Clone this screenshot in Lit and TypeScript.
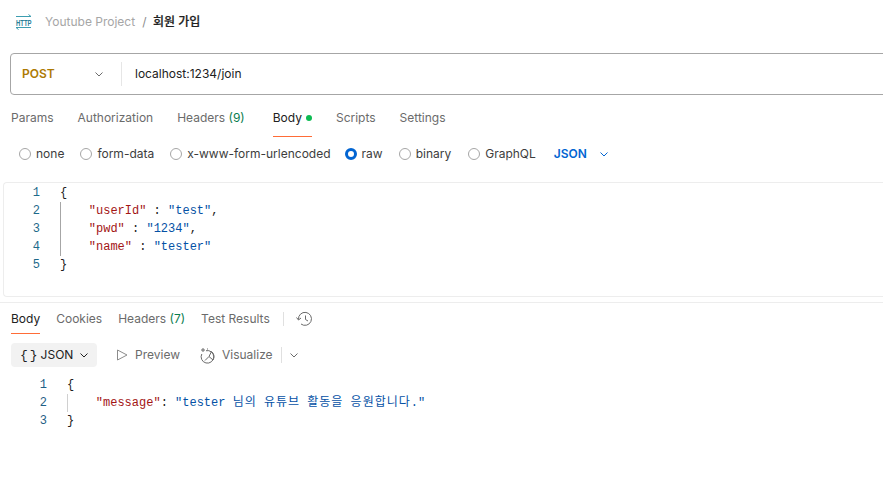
import { LitElement, html, css } from "lit";
import { customElement } from "lit/decorators.js";

const chev = html`<svg class="chev" width="12" height="12" viewBox="0 0 12 12"><path d="M2.500 4.500 6 8l3.500-3.500" fill="none" stroke="currentColor" stroke-width="1"/></svg>`;

@customElement("app-root")
export class AppRoot extends LitElement {
  static styles = css`
    :host { display: block; width: 883px; height: 504px; overflow: hidden; background: #fff; font: 12px/16px Inter, "Noto Sans CJK KR", sans-serif; color: #6b6b6b; }
    .crumbs { display: flex; align-items: center; height: 44px; padding-left: 15px; }
    .crumbs svg { margin-right: 12px; overflow: visible; }
    .proj { color: #a6a6a6; }
    .sep { color: #8c8c8c; margin: 0 6.500px 0 7px; }
    .title { color: #212121; font-weight: 500; -webkit-text-stroke: 0.2px #212121; }
    .url { display: flex; align-items: center; height: 40px; margin: 9px -20px 0 10px; border: 1px solid #a6a6a6; border-radius: 4px; }
    .method { width: 111px; box-sizing: border-box; padding: 0 11px; display: flex; align-items: center; color: #ad7a03; font-weight: 600; height: 24px; border-right: 1px solid #e6e6e6; }
    .method span { flex: 1; }
    .method .chev { color: #6b6b6b; margin-right: 5px; }
    .addr { margin-left: 13px; color: #212121; }
    .tabs { display: flex; height: 38px; margin-top: 4px; padding-left: 11px; gap: 24px; }
    .tab { display: flex; align-items: center; position: relative; }
    .tab.on { color: #212121; }
    .tab.on::after { content: ""; position: absolute; left: 0; right: 0; bottom: 0; height: 1px; background: #ff6c37; }
    .tab.wide { margin-right: 4px; }
    .cnt { color: #0a7d4f; }
    .dot { width: 6px; height: 6px; border-radius: 50%; background: #0cbb52; margin-left: 4px; }
    .modes { display: flex; align-items: center; height: 28px; margin-top: 3px; padding-left: 19px; gap: 16px; }
    .modes label { display: flex; align-items: center; gap: 5px; color: #3d3d3d; }
    .modes label:nth-child(3) { margin-right: -2px; }
    .modes label:nth-child(5) { margin-right: 1px; }
    .r { width: 12px; height: 12px; box-sizing: border-box; border-radius: 50%; border: 1px solid #a6a6a6; }
    .r.on { border: 3.500px solid #0265d2; }
    .lang { display: flex; align-items: center; gap: 11px; color: #0265d2; font-weight: 600; margin-left: 2px; }
    .editor { margin: 14px 0 0 3px; height: 115px; box-sizing: border-box; border: 1px solid #ededed; border-right: 0; border-radius: 4px 0 0 4px; padding-top: 1px; }
    .code { font: 12px/18px "Liberation Mono", "Noto Sans CJK KR", monospace; }
    .ln { display: flex; align-items: stretch; height: 18px; }
    .n { text-align: right; color: #1d6a8a; flex: none; }
    .editor .n { width: 36px; }
    .gutter { flex: none; width: 20px; }
    .resp .n { width: 47px; color: #1f5f86; }
    .txt { position: relative; flex: 1; white-space: pre; }
    .guide::before { content: ""; position: absolute; left: 0; top: 0; bottom: 0; width: 1px; background: #a6a6a6; }
    .resp .guide::before { background: #d0d0d0; }
    .k { color: #a31515; }
    .s { color: #0451a5; }
    .p { color: #212121; }
    .ko { letter-spacing: 1px; }
    .rule { height: 1px; background: #ededed; margin-top: 5px; }
    .rtabs { display: flex; height: 31px; padding-left: 11px; gap: 16px; }
    .vb { width: 1px; height: 14px; background: #e0e0e0; align-self: center; margin: 0 -4px 0 -3px; }
    .hist { align-self: center; display: block; }
    .bar { display: flex; align-items: center; height: 24px; margin-top: 9px; padding-left: 11px; }
    .json { display: flex; align-items: center; width: 86px; height: 24px; box-sizing: border-box; background: #f2f2f2; border-radius: 4px; padding-left: 9px; color: #212121; }
    .br { font: 13px "Liberation Mono", monospace; margin-right: 1px; letter-spacing: 2px; }
    .json .chev { margin-left: 5px; }
    .act { display: flex; align-items: center; gap: 6px; }
    .act.prev { margin-left: 18px; }
    .act.vis { margin-left: 19px; gap: 5px; }
    .vline { width: 1px; height: 16px; background: #e0e0e0; margin: 0 6px 0 8px; }
    .resp { margin-top: 9px; }
    .http { font: 700 9.500px "Liberation Sans", sans-serif; fill: #2b7f97; }
  `;

  private line(n: number, body: unknown, guide = false) {
    return html`<div class="ln"><div class="n">${n}</div><div class="gutter"></div><div class="txt ${guide ? "guide" : ""}">${body}</div></div>`;
  }

  private radio(label: string, on = false) {
    return html`<label><span class="r ${on ? "on" : ""}"></span>${label}</label>`;
  }

  render() {
    return html`
      <div class="crumbs">
        <svg width="18" height="17" viewBox="0 0 18 17" fill="none">
          <path d="M1 2.500h15M13.500 0.500l2.500 2" stroke="#3d9db0"/>
          <text class="http" x="1" y="12" textLength="15.500" lengthAdjust="spacingAndGlyphs">HTTP</text>
          <path d="M16 13.500H1M3.500 15.500l-2.500-2" stroke="#3d9db0"/>
        </svg>
        <span class="proj">Youtube Project</span><span class="sep">/</span><span class="title">회원 가입</span>
      </div>
      <div class="url">
        <div class="method"><span>POST</span>${chev}</div>
        <div class="addr">localhost:1234/join</div>
      </div>
      <div class="tabs">
        <div class="tab">Params</div>
        <div class="tab">Authorization</div>
        <div class="tab wide">Headers&nbsp;<span class="cnt">(9)</span></div>
        <div class="tab on">Body<span class="dot"></span></div>
        <div class="tab">Scripts</div>
        <div class="tab">Settings</div>
      </div>
      <div class="modes">
        ${this.radio("none")}${this.radio("form-data")}${this.radio("x-www-form-urlencoded")}${this.radio("raw", true)}${this.radio("binary")}${this.radio("GraphQL")}
        <div class="lang">JSON ${chev}</div>
      </div>
      <div class="editor code">
        ${this.line(1, html`<span class="p">{</span>`)}
        ${this.line(2, html`    <span class="k">"userId"</span><span class="p"> : </span><span class="s">"test"</span><span class="p">,</span>`, true)}
        ${this.line(3, html`    <span class="k">"pwd"</span><span class="p"> : </span><span class="s">"1234"</span><span class="p">,</span>`, true)}
        ${this.line(4, html`    <span class="k">"name"</span><span class="p"> : </span><span class="s">"tester"</span>`, true)}
        ${this.line(5, html`<span class="p">}</span>`)}
      </div>
      <div class="rule"></div>
      <div class="rtabs">
        <div class="tab on">Body</div>
        <div class="tab">Cookies</div>
        <div class="tab">Headers&nbsp;<span class="cnt">(7)</span></div>
        <div class="tab">Test Results</div>
        <div class="vb"></div>
        <svg class="hist" width="17" height="16" viewBox="0 0 17 16" fill="none" stroke="#6b6b6b">
          <path d="M0.500 6.500l2 2.500 2.500-2M2.500 8.500a6.500 6.500 0 1 1 2.500 4.500M9.500 4.500V8.500l2.500 1.500"/>
        </svg>
      </div>
      <div class="bar">
        <div class="json"><span class="br">{}</span>JSON${chev}</div>
        <div class="act prev">
          <svg width="14" height="14" viewBox="0 0 14 14" fill="none" stroke="#8c8c8c"><path d="M2.500 2v10L12 7z"/></svg>
          <span>Preview</span>
        </div>
        <div class="act vis">
          <svg width="18" height="17" viewBox="0 0 18 17" fill="none" stroke="#6b6b6b">
            <path d="M7 3.700A6.300 6.300 0 1 1 2.800 7M10 9.500 12.500 4.500A6.300 6.300 0 0 1 14 13zM10 9.500 6 13.500"/>
            <path d="M4 1v4M2 3h4M8.500 1.500v1"/>
          </svg>
          <span>Visualize</span>
        </div>
        <div class="vline"></div>
        <span class="act">${chev}</span>
      </div>
      <div class="resp code">
        ${this.line(1, html`<span class="p">{</span>`)}
        ${this.line(2, html`    <span class="k">"message"</span><span class="p">: </span><span class="s">"tester <span class="ko">님의</span> <span class="ko">유튜브</span> <span class="ko">활동을</span> <span class="ko">응원합니다</span>."</span>`, true)}
        ${this.line(3, html`<span class="p">}</span>`)}
      </div>
    `;
  }
}
